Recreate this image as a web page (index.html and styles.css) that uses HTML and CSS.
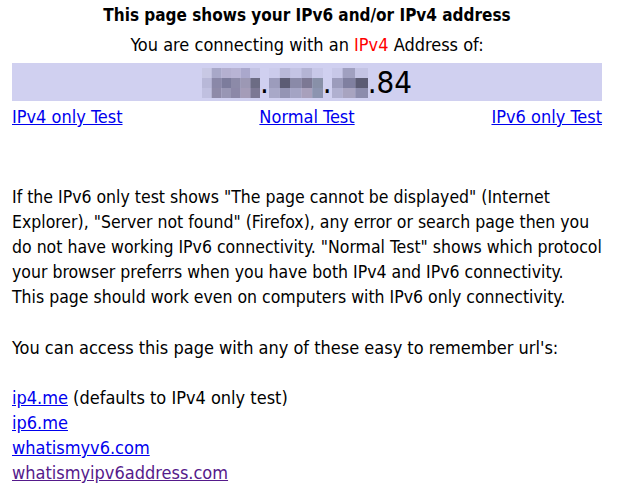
FILE: index.html
```html
<!DOCTYPE html>
<html lang="en">
<head>
  <meta charset="UTF-8">
  <title>What is my IPv6 address?</title>
  <link rel="stylesheet" href="styles.css">
</head>
<body>

  <div class="page">
    <h1 class="title">This page shows your IPv6 and/or IPv4 address</h1>
    <p class="connecting">You are connecting with an <span class="proto">IPv4</span> Address of:</p>

    <div class="address">
      <svg class="mosaic" width="58" height="30" viewBox="0 0 60 30" preserveAspectRatio="none">
        <rect x="0" y="0" width="10" height="10" fill="#c8c8e4"/>
        <rect x="10" y="0" width="10" height="10" fill="#a8a8c8"/>
        <rect x="20" y="0" width="10" height="10" fill="#b4b0d0"/>
        <rect x="30" y="0" width="10" height="10" fill="#b8b4d4"/>
        <rect x="40" y="0" width="10" height="10" fill="#aaa8cc"/>
        <rect x="50" y="0" width="10" height="10" fill="#c4c4e4"/>
        <rect x="0" y="10" width="10" height="10" fill="#b8b8d8"/>
        <rect x="10" y="10" width="10" height="10" fill="#8a88a8"/>
        <rect x="20" y="10" width="10" height="10" fill="#7c7c9c"/>
        <rect x="30" y="10" width="10" height="10" fill="#8c8aa8"/>
        <rect x="40" y="10" width="10" height="10" fill="#9c98b4"/>
        <rect x="50" y="10" width="10" height="10" fill="#6c6c84"/>
        <rect x="0" y="20" width="10" height="10" fill="#c0c0e0"/>
        <rect x="10" y="20" width="10" height="10" fill="#8e8aa8"/>
        <rect x="20" y="20" width="10" height="10" fill="#9896b4"/>
        <rect x="30" y="20" width="10" height="10" fill="#8c88a8"/>
        <rect x="40" y="20" width="10" height="10" fill="#a49cb8"/>
        <rect x="50" y="20" width="10" height="10" fill="#7c7894"/>
      </svg><span class="dot">.</span><svg class="mosaic" width="54" height="30" viewBox="0 0 50 30" preserveAspectRatio="none">
        <rect x="0" y="0" width="10" height="10" fill="#ccccec"/>
        <rect x="10" y="0" width="10" height="10" fill="#b8b8d8"/>
        <rect x="20" y="0" width="10" height="10" fill="#c4c4e4"/>
        <rect x="30" y="0" width="10" height="10" fill="#b4b4d4"/>
        <rect x="40" y="0" width="10" height="10" fill="#c8c8e8"/>
        <rect x="0" y="10" width="10" height="10" fill="#9c9cbc"/>
        <rect x="10" y="10" width="10" height="10" fill="#5c5c74"/>
        <rect x="20" y="10" width="10" height="10" fill="#8a8aa8"/>
        <rect x="30" y="10" width="10" height="10" fill="#7c7894"/>
        <rect x="40" y="10" width="10" height="10" fill="#8890a8"/>
        <rect x="0" y="20" width="10" height="10" fill="#a8a8c8"/>
        <rect x="10" y="20" width="10" height="10" fill="#9494b4"/>
        <rect x="20" y="20" width="10" height="10" fill="#a4a4c4"/>
        <rect x="30" y="20" width="10" height="10" fill="#a8a0bc"/>
        <rect x="40" y="20" width="10" height="10" fill="#8c94b0"/>
      </svg><span class="dot">.</span><svg class="mosaic" width="36" height="30" viewBox="0 0 34 30" preserveAspectRatio="none">
        <rect x="0" y="0" width="10" height="10" fill="#c8c8e8"/>
        <rect x="10" y="0" width="12" height="10" fill="#a0a0c0"/>
        <rect x="22" y="0" width="12" height="10" fill="#c4c4e4"/>
        <rect x="0" y="10" width="10" height="10" fill="#9c9cbc"/>
        <rect x="10" y="10" width="12" height="10" fill="#8080a0"/>
        <rect x="22" y="10" width="12" height="10" fill="#5c5c74"/>
        <rect x="0" y="20" width="10" height="10" fill="#b0b0d0"/>
        <rect x="10" y="20" width="12" height="10" fill="#a8a4c0"/>
        <rect x="22" y="20" width="12" height="10" fill="#8c8cac"/>
      </svg><span class="dot">.84</span>
    </div>

    <div class="tests">
      <a href="#" class="test-left">IPv4 only Test</a>
      <a href="#" class="test-mid">Normal Test</a>
      <a href="#" class="test-right">IPv6 only Test</a>
    </div>

    <p class="info explain">
      If the IPv6 only test shows "The page cannot be displayed" (Internet<br>
      Explorer), "Server not found" (Firefox), any error or search page then you<br>
      do not have working IPv6 connectivity. "Normal Test" shows which protocol<br>
      your browser preferrs when you have both IPv4 and IPv6 connectivity.<br>
      This page should work even on computers with IPv6 only connectivity.
    </p>

    <p class="info">You can access this page with any of these easy to remember url's:</p>

    <ul class="urls">
      <li><a href="#">ip4.me</a> (defaults to IPv4 only test)</li>
      <li><a href="#">ip6.me</a></li>
      <li><a href="#">whatismyv6.com</a></li>
      <li><a href="#" class="visited">whatismyipv6address.com</a></li>
    </ul>
  </div>

</body>
</html>
```

FILE: styles.css
```css
body {
  margin: 0;
  font-family: "DejaVu Sans Condensed", "DejaVu Sans", sans-serif;
  font-size: 18px;
  color: #000;
  background-color: #fff;
}
.page {
  width: 590px;
  margin-left: 12px;
}
.title {
  font-size: 17px;
  font-weight: bold;
  text-align: center;
  margin: 4px 0 0 0;
  line-height: 22px;
}
.connecting {
  font-size: 18px;
  text-align: center;
  margin: 7px 0 0 0;
  line-height: 24px;
}
.proto {
  color: #ff0000;
}
.address {
  margin-top: 6px;
  height: 38px;
  background-color: #d0d0f0;
  display: flex;
  justify-content: center;
  align-items: center;
  font-size: 31px;
}
.mosaic {
  display: block;
  margin-top: 2px;
}
.dot {
  line-height: 38px;
}
.tests {
  display: grid;
  grid-template-columns: 1fr auto 1fr;
  margin-top: 4px;
  line-height: 24px;
}
.test-right {
  justify-self: end;
}
a {
  color: #0000ee;
}
a.visited {
  color: #551a8b;
}
.info {
  margin: 0;
  line-height: 25px;
  white-space: nowrap;
}
.explain {
  font-size: 17.5px;
}
.tests + .info {
  margin-top: 56px;
}
.info + .info {
  margin-top: 25px;
}
.urls {
  list-style: none;
  padding: 0;
  margin: 25px 0 0 0;
  line-height: 25px;
}
```
